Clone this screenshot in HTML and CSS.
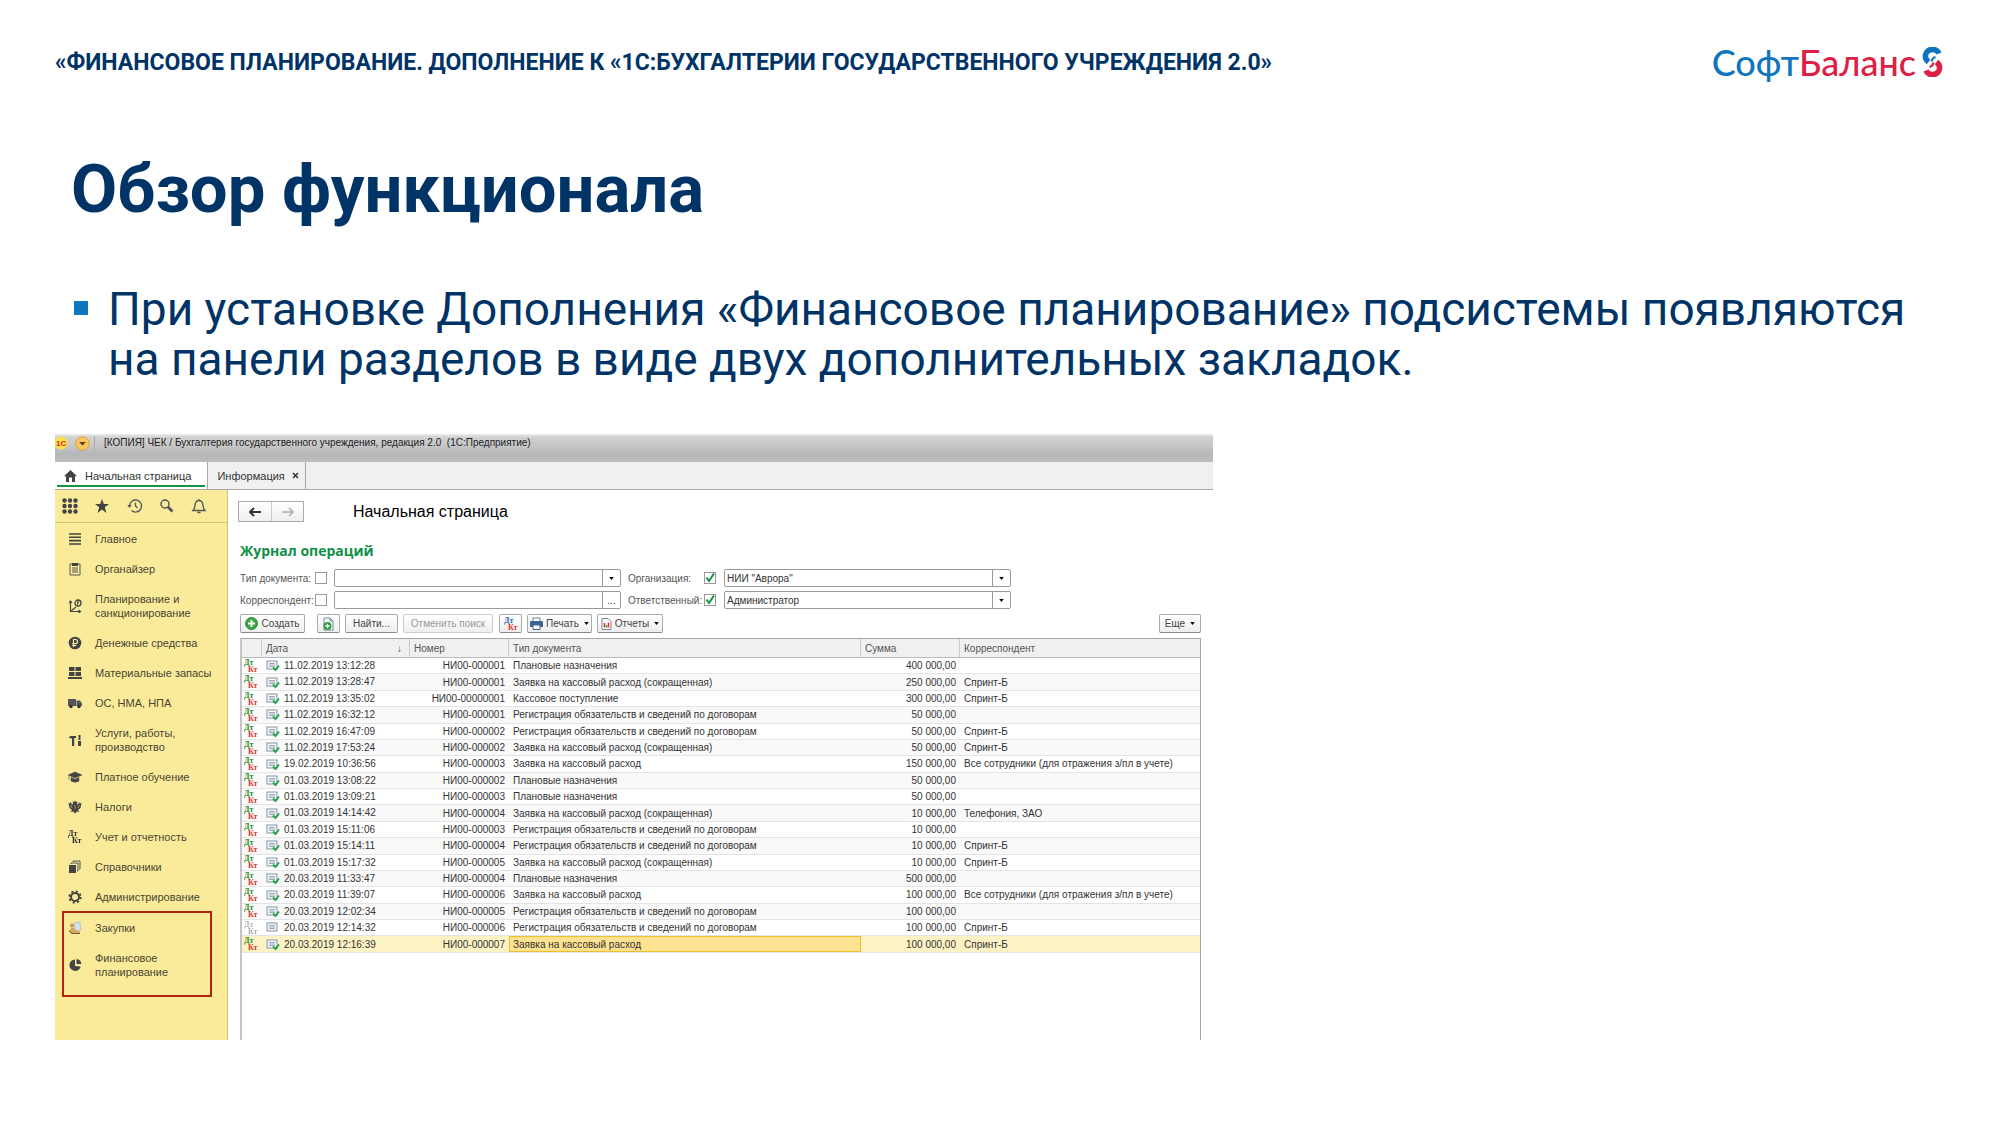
FILE: index.html
```html
<!DOCTYPE html>
<html lang="ru">
<head>
<meta charset="utf-8">
<meta name="viewport" content="width=device-width, initial-scale=1">
<title>Обзор функционала</title>
<link rel="stylesheet" href="styles.css">
</head>
<body>
<svg class="sprite" aria-hidden="true">
  <symbol id="dk" viewBox="0 0 14 14"><text class="dk-d" x="0" y="6">Дт</text><text class="dk-k" x="4" y="13">Кт</text></symbol>
  <symbol id="doc" viewBox="0 0 14 12"><rect x="1" y="1" width="10" height="8" fill="#f4f8fb" stroke="#8197ab"/><path d="M3 3.5h6M3 5h6M3 6.500h6" stroke="#8a9aa8" stroke-width=".8"/></symbol>
  <symbol id="ok" viewBox="0 0 14 12"><rect x="1" y="1" width="10" height="8" fill="#f4f8fb" stroke="#8197ab"/><path d="M3 3.5h6M3 5h6M3 6.500h6" stroke="#8a9aa8" stroke-width=".8"/><path d="M7 7.500l2.500 2.500L13 5.500" fill="none" stroke="#27a348" stroke-width="2"/></symbol>
  <symbol id="car" viewBox="0 0 6 4"><path d="M0 0h6L3 4z"/></symbol>
</svg>

<header class="top">
  <p class="product">«ФИНАНСОВОЕ ПЛАНИРОВАНИЕ. ДОПОЛНЕНИЕ К «1С:БУХГАЛТЕРИИ ГОСУДАРСТВЕННОГО УЧРЕЖДЕНИЯ 2.0»</p>
  <div class="logo"><span><b class="logo-a">Софт</b><b class="logo-b">Баланс</b></span>
    <svg width="21" height="30" viewBox="0 0 21 30" fill="none" stroke-width="5.500"><path d="M17 6.500A7 6.500 0 0 0 4 6.500Q2 11.500 6.500 15" stroke="#0f75bc"/><path d="M4 23.500A7 6.500 0 0 0 17 23.500Q19 18.500 14.500 15" stroke="#dc1f44"/><path d="M9.500 14.500q.5-3.500 4-4.500" stroke="#0f75bc" stroke-width="2"/><path d="M11.500 15.500q-.5 3.500-4 4.500" stroke="#dc1f44" stroke-width="2"/></svg>
  </div>
</header>

<main class="slide">
  <h1>Обзор функционала</h1>
  <ul class="points"><li>При установке Дополнения «Финансовое планирование» подсистемы появляются на панели разделов в виде двух дополнительных закладок.</li></ul>

  <section class="app">
    <div class="titlebar">
      <svg width="13" height="14" viewBox="0 0 13 14"><ellipse cx="6" cy="7" rx="6.500" ry="6.500" fill="#fbe24a"/><text class="one-c" x="1" y="10">1С</text></svg>
      <svg class="menu-dot" width="15" height="15" viewBox="0 0 15 15"><circle cx="7.500" cy="7.500" r="6.700" fill="#f8c65e" stroke="#d9a33c"/><path d="M4 6h7l-3.500 3.500z" fill="#5d4320"/></svg>
      <span class="title-text">[КОПИЯ] ЧЕК / Бухгалтерия государственного учреждения, редакция 2.0&nbsp; (1С:Предприятие)</span>
    </div>
    <nav class="tabs">
      <a class="tab active" href="#home"><svg width="13" height="12" viewBox="0 0 13 12"><path d="M6.500 0L13 6.200h-2V12H8V7.500H5V12H2V6.200H0z" fill="#444"/></svg>Начальная страница</a>
      <a class="tab" href="#info">Информация<svg width="7" height="7" viewBox="0 0 7 7"><path d="M1 1l5 5M6 1L1 6" stroke="#333" stroke-width="1.500"/></svg></a>
    </nav>
    <div class="workspace">
      <aside class="side">
        <div class="tools">
          <button type="button" aria-label="Разделы"><svg width="16" height="16" viewBox="0 0 16 16" fill="#444"><circle cx="2.500" cy="2.500" r="2.200"/><circle cx="8" cy="2.500" r="2.200"/><circle cx="13.500" cy="2.500" r="2.200"/><circle cx="2.500" cy="8" r="2.200"/><circle cx="8" cy="8" r="2.200"/><circle cx="13.500" cy="8" r="2.200"/><circle cx="2.500" cy="13.500" r="2.200"/><circle cx="8" cy="13.500" r="2.200"/><circle cx="13.500" cy="13.500" r="2.200"/></svg></button>
          <button type="button" aria-label="Избранное"><svg width="16" height="16" viewBox="0 0 16 16"><path d="M8 1l1.800 5H15l-4.200 3.200L12.400 15 8 11.400 3.600 15l1.600-5.800L1 6h5.200z" fill="#444"/></svg></button>
          <button type="button" aria-label="История"><svg width="16" height="16" viewBox="0 0 16 16" fill="none" stroke="#555" stroke-width="1.300"><path d="M2.500 8a6 6 0 1 1 2 4.500M8.500 4.500V8l2 2"/><path d="M.3 7h4.400L2.500 10z" fill="#555" stroke="none"/></svg></button>
          <button type="button" aria-label="Поиск"><svg width="16" height="16" viewBox="0 0 16 16" fill="none" stroke="#555"><circle cx="6" cy="6" r="4" stroke-width="1.500"/><path d="M9 9l4.500 4.500" stroke-width="2.800"/></svg></button>
          <button type="button" aria-label="Уведомления"><svg width="16" height="16" viewBox="0 0 16 16" fill="none" stroke="#555" stroke-width="1.300"><path d="M2 12.500C4.500 10 3.500 8 4.500 5 5.200 3 6.500 2.500 8 2.500S10.800 3 11.500 5c1 3 0 5 2.500 7.500zM8 1v1.500M6.500 14.500h3"/></svg></button>
        </div>
        <ul class="sections">
          <li><a href="#s1"><svg viewBox="0 0 14 14"><path d="M1 2h12M1 5.300h12M1 8.600h12M1 12h12" stroke="#444" stroke-width="1.600"/></svg>Главное</a></li>
          <li><a href="#s2"><svg viewBox="0 0 14 14"><path d="M2 2h10v11H2zM4 6h6M4 8h6M4 10h6" fill="none" stroke="#555"/><path d="M4 1h6v3H4z" fill="#444"/></svg>Органайзер</a></li>
          <li><a href="#s3"><svg viewBox="0 0 14 14"><path d="M2.500 13V2M1 4l1.500-2L4 4M2 12.500h10M10.500 11l2 1.500-2 1.500M3 12l5-4" fill="none" stroke="#444" stroke-width="1.200"/><circle cx="10" cy="4" r="3" fill="none" stroke="#444" stroke-width="1.300"/><path d="M9.500 6V2.500h1.200v1.700H9" fill="none" stroke="#444" stroke-width=".8"/></svg>Планирование и<br>санкционирование</a></li>
          <li><a href="#s4"><svg viewBox="0 0 14 14"><circle cx="7" cy="7" r="6.300" fill="#444"/><path d="M5.500 11V3.500h2a2 2 0 0 1 0 4H4.300M4.300 9.300h4" fill="none" stroke="#faeb9b" stroke-width="1.200"/></svg>Денежные средства</a></li>
          <li><a href="#s5"><svg viewBox="0 0 14 14"><path d="M1 1h5.500v4H1zM7.500 1H13v4H7.500zM1 6h5.500v4H1zM7.500 6H13v4H7.500zM0 11h14v2H0z" fill="#444"/></svg>Материальные запасы</a></li>
          <li><a href="#s6"><svg viewBox="0 0 14 14"><path d="M0 3h8v7H0zM8.500 4.500H12l2 3V10H8.500z" fill="#555"/><circle cx="3" cy="10.500" r="1.700" fill="#333"/><circle cx="11" cy="10.500" r="1.700" fill="#333"/></svg>ОС, НМА, НПА</a></li>
          <li><a href="#s7"><svg viewBox="0 0 14 14"><path d="M1 5q0-2 2-2h5v2H6.200v8H4V5.500zM10.500 2h2v5h-2zM10 8h3v5h-3z" fill="#444"/></svg>Услуги, работы,<br>производство</a></li>
          <li><a href="#s8"><svg viewBox="0 0 14 14"><path d="M7 2l7 3-7 3-7-3zM3 7.500l4 1.700 4-1.700V11q-4 2.500-8 0zM1 6v4" fill="#444" stroke="#444" stroke-width=".5"/></svg>Платное обучение</a></li>
          <li><a href="#s9"><svg viewBox="0 0 14 14"><path d="M5 3.500L4.500 1.500 6 2l1-1.500L8 2l1.500-.5L9 3.500l1 1.500 1-3 1 1.500 1.500-1-.5 3-.5 2.500L10 10l1.500 2-2.500-.5-2 2-2-2-2.500.5L4 10 1.500 8 1 5.500l-.5-3 1.500 1L3 2l1 3z" fill="#444"/><path d="M7 5v4M2.500 5l1.500 3M11.500 5L10 8" stroke="#c9be7c" stroke-width=".7" fill="none"/></svg>Налоги</a></li>
          <li><a href="#s10"><svg class="mono" viewBox="0 0 14 14"><use href="#dk"/></svg>Учет и отчетность</a></li>
          <li><a href="#s11"><svg viewBox="0 0 14 14"><path d="M1 5h7v8H1z" fill="#444"/><path d="M3 4V3h7v8H9M5 2V1h7v8h-1" fill="none" stroke="#555"/></svg>Справочники</a></li>
          <li><a href="#s12"><svg viewBox="0 0 14 14" fill="none" stroke="#444"><circle cx="7" cy="7" r="4" stroke-width="2"/><circle cx="7" cy="7" r="5.700" stroke-width="1.800" stroke-dasharray="2.200 2.277"/></svg>Администрирование</a></li>
          <li class="marked"><ul>
            <li><a href="#s13"><svg viewBox="0 0 14 14"><path d="M6 2l6-1 1 8-6 1z" fill="#d5e2ec" stroke="#9db2c2" stroke-width=".6"/><circle cx="4" cy="4.500" r="2" fill="#c99550"/><path d="M1 10q2-4 5-3l3 3 3 .5v2H3z" fill="#d9a45b"/><path d="M1 10l3 2.500h8" stroke="#725c45" fill="none"/></svg>Закупки</a></li>
            <li><a href="#s14"><svg viewBox="0 0 14 14"><path d="M7 1.500A5.700 5.700 0 1 0 12.700 8.500L7 8z" fill="#444"/><path d="M8.500 1A5 5 0 0 1 13.300 6L8.500 6z" fill="#444"/></svg>Финансовое<br>планирование</a></li>
          </ul></li>
        </ul>
      </aside>

      <div class="content">
        <div class="page-head">
          <div class="history">
            <button type="button" aria-label="Назад"><svg width="13" height="10" viewBox="0 0 13 10"><path d="M1 5h11M5 1L1 5l4 4" fill="none" stroke="#333" stroke-width="2"/></svg></button>
            <button type="button" aria-label="Вперед"><svg width="13" height="10" viewBox="0 0 13 10"><path d="M1 5h10.500M8 1l4 4-4 4" fill="none" stroke="#aaa" stroke-width="1.500"/></svg></button>
          </div>
          <h2>Начальная страница</h2>
        </div>
        <h3>Журнал операций</h3>

        <form class="filters">
          <label for="f1">Тип документа:</label><input type="checkbox" aria-label="Отбор по типу документа">
          <div class="combo"><select id="f1"><option></option></select><span class="drop"><svg width="5" height="3"><use href="#car"/></svg></span></div>
          <label for="f2">Организация:</label><input type="checkbox" checked aria-label="Отбор по организации">
          <div class="combo"><select id="f2"><option>НИИ "Аврора"</option></select><span class="drop"><svg width="5" height="3"><use href="#car"/></svg></span></div>
          <label for="f3">Корреспондент:</label><input type="checkbox" aria-label="Отбор по корреспонденту">
          <div class="combo"><input type="text" id="f3"><button type="button" class="drop">...</button></div>
          <label for="f4">Ответственный:</label><input type="checkbox" checked aria-label="Отбор по ответственному">
          <div class="combo"><select id="f4"><option>Администратор</option></select><span class="drop"><svg width="5" height="3"><use href="#car"/></svg></span></div>
        </form>

        <div class="commands">
          <button type="button" class="btn create"><svg width="13" height="13" viewBox="0 0 13 13"><circle cx="6.500" cy="6.500" r="6" fill="#3aa648" stroke="#2a8a3a"/><path d="M6.500 3v7M3 6.500h7" stroke="#fff" stroke-width="2"/></svg>Создать</button>
          <button type="button" class="btn copy" aria-label="Скопировать"><svg width="13" height="14" viewBox="0 0 13 14"><path d="M2 1h6l3 3v9H2z" fill="#fff" stroke="#71869a"/><path d="M8 1v3h3" fill="none" stroke="#71869a"/><circle cx="5.500" cy="9" r="4" fill="#2f9c3f"/><path d="M5.500 6.800v4.400M3.300 9h4.400" stroke="#fff" stroke-width="1.300"/></svg></button>
          <button type="button" class="btn find">Найти...</button>
          <button type="button" class="btn cancel" disabled>Отменить поиск</button>
          <button type="button" class="btn entries" aria-label="Проводки"><svg class="blue" width="14" height="14" viewBox="0 0 14 14"><text class="dk-d" x="0" y="6">Дт</text><text class="dk-k" x="4" y="13">Кт</text></svg></button>
          <button type="button" class="btn print"><svg width="13" height="13" viewBox="0 0 13 13"><path d="M3 1h7v4H3z" fill="#fff" stroke="#6b7f93"/><path d="M0 5q0-1 1-1h11q1 0 1 1v5H0z" fill="#3c6591"/><path d="M3 8h7v4.500H3z" fill="#fff" stroke="#3c6591"/></svg>Печать<svg class="caret" width="5" height="3"><use href="#car"/></svg></button>
          <button type="button" class="btn reports"><svg width="11" height="12" viewBox="0 0 11 12"><path d="M1 .5h6l3 3v8H1z" fill="#fff" stroke="#7d8790"/><path d="M3.500 9.500V5" stroke="#d33" stroke-width="1.600"/><path d="M5.500 9.500V7" stroke="#2a9a3c" stroke-width="1.600"/><path d="M7.500 9.500V4.500" stroke="#d33" stroke-width="1.600"/></svg>Отчеты<svg class="caret" width="5" height="3"><use href="#car"/></svg></button>
          <button type="button" class="btn more">Еще<svg class="caret" width="5" height="3"><use href="#car"/></svg></button>
        </div>

        <div class="grid">
          <table>
            <colgroup><col class="c-dk"><col class="c-date"><col class="c-num"><col class="c-type"><col class="c-sum"><col></colgroup>
            <thead><tr><th></th><th><span class="sorted">Дата<span>↓</span></span></th><th>Номер</th><th>Тип документа</th><th>Сумма</th><th>Корреспондент</th></tr></thead>
            <tbody>
            <tr><td><svg><use href="#dk"/></svg></td><td><svg><use href="#ok"/></svg>11.02.2019 13:12:28</td><td>НИ00-000001</td><td>Плановые назначения</td><td>400 000,00</td><td></td></tr>
            <tr><td><svg><use href="#dk"/></svg></td><td><svg><use href="#ok"/></svg>11.02.2019 13:28:47</td><td>НИ00-000001</td><td>Заявка на кассовый расход (сокращенная)</td><td>250 000,00</td><td>Спринт-Б</td></tr>
            <tr><td><svg><use href="#dk"/></svg></td><td><svg><use href="#ok"/></svg>11.02.2019 13:35:02</td><td>НИ00-00000001</td><td>Кассовое поступление</td><td>300 000,00</td><td>Спринт-Б</td></tr>
            <tr><td><svg><use href="#dk"/></svg></td><td><svg><use href="#ok"/></svg>11.02.2019 16:32:12</td><td>НИ00-000001</td><td>Регистрация обязательств и сведений по договорам</td><td>50 000,00</td><td></td></tr>
            <tr><td><svg><use href="#dk"/></svg></td><td><svg><use href="#ok"/></svg>11.02.2019 16:47:09</td><td>НИ00-000002</td><td>Регистрация обязательств и сведений по договорам</td><td>50 000,00</td><td>Спринт-Б</td></tr>
            <tr><td><svg><use href="#dk"/></svg></td><td><svg><use href="#ok"/></svg>11.02.2019 17:53:24</td><td>НИ00-000002</td><td>Заявка на кассовый расход (сокращенная)</td><td>50 000,00</td><td>Спринт-Б</td></tr>
            <tr><td><svg><use href="#dk"/></svg></td><td><svg><use href="#ok"/></svg>19.02.2019 10:36:56</td><td>НИ00-000003</td><td>Заявка на кассовый расход</td><td>150 000,00</td><td>Все сотрудники (для отражения з/пл в учете)</td></tr>
            <tr><td><svg><use href="#dk"/></svg></td><td><svg><use href="#ok"/></svg>01.03.2019 13:08:22</td><td>НИ00-000002</td><td>Плановые назначения</td><td>50 000,00</td><td></td></tr>
            <tr><td><svg><use href="#dk"/></svg></td><td><svg><use href="#ok"/></svg>01.03.2019 13:09:21</td><td>НИ00-000003</td><td>Плановые назначения</td><td>50 000,00</td><td></td></tr>
            <tr><td><svg><use href="#dk"/></svg></td><td><svg><use href="#ok"/></svg>01.03.2019 14:14:42</td><td>НИ00-000004</td><td>Заявка на кассовый расход (сокращенная)</td><td>10 000,00</td><td>Телефония, ЗАО</td></tr>
            <tr><td><svg><use href="#dk"/></svg></td><td><svg><use href="#ok"/></svg>01.03.2019 15:11:06</td><td>НИ00-000003</td><td>Регистрация обязательств и сведений по договорам</td><td>10 000,00</td><td></td></tr>
            <tr><td><svg><use href="#dk"/></svg></td><td><svg><use href="#ok"/></svg>01.03.2019 15:14:11</td><td>НИ00-000004</td><td>Регистрация обязательств и сведений по договорам</td><td>10 000,00</td><td>Спринт-Б</td></tr>
            <tr><td><svg><use href="#dk"/></svg></td><td><svg><use href="#ok"/></svg>01.03.2019 15:17:32</td><td>НИ00-000005</td><td>Заявка на кассовый расход (сокращенная)</td><td>10 000,00</td><td>Спринт-Б</td></tr>
            <tr><td><svg><use href="#dk"/></svg></td><td><svg><use href="#ok"/></svg>20.03.2019 11:33:47</td><td>НИ00-000004</td><td>Плановые назначения</td><td>500 000,00</td><td></td></tr>
            <tr><td><svg><use href="#dk"/></svg></td><td><svg><use href="#ok"/></svg>20.03.2019 11:39:07</td><td>НИ00-000006</td><td>Заявка на кассовый расход</td><td>100 000,00</td><td>Все сотрудники (для отражения з/пл в учете)</td></tr>
            <tr><td><svg><use href="#dk"/></svg></td><td><svg><use href="#ok"/></svg>20.03.2019 12:02:34</td><td>НИ00-000005</td><td>Регистрация обязательств и сведений по договорам</td><td>100 000,00</td><td></td></tr>
            <tr><td><svg class="draft"><use href="#dk"/></svg></td><td><svg><use href="#doc"/></svg>20.03.2019 12:14:32</td><td>НИ00-000006</td><td>Регистрация обязательств и сведений по договорам</td><td>100 000,00</td><td>Спринт-Б</td></tr>
            <tr class="current"><td><svg><use href="#dk"/></svg></td><td><svg><use href="#ok"/></svg>20.03.2019 12:16:39</td><td>НИ00-000007</td><td>Заявка на кассовый расход</td><td>100 000,00</td><td>Спринт-Б</td></tr>
            </tbody>
          </table>
        </div>
      </div>
    </div>
  </section>
</main>
</body>
</html>
```
FILE: styles.css
```css
* { box-sizing: border-box; }
body { margin: 0; background: #fff; color: #003366; font-family: Roboto, sans-serif; }
h1, h2, h3, p, ul { margin: 0; padding: 0; }
ul { list-style: none; }
a { color: inherit; text-decoration: none; }
button, input, select { font: inherit; color: inherit; margin: 0; }
svg { flex: none; display: block; }
.sprite { display: none; }

.top { display: flex; justify-content: space-between; align-items: center; padding: 45px 57px 0 55px; height: 80px; }
.product { font-size: 23px; font-weight: 700; line-height: 36px; }
.logo { display: flex; align-items: center; gap: 6px; padding-bottom: 2px; font: 36px/32px Lato, Inter, sans-serif; }
.logo b { font-weight: 500; }
.logo-a { color: #0f75bc; }
.logo-b { color: #dc1f44; }

.slide { padding: 69px 55px 0; }
h1 { padding-left: 16px; font-size: 67px; line-height: 80px; font-weight: 700; }
.points { margin: 55px 0 50px; padding-left: 19px; font-size: 46px; line-height: 50px; }
.points li { display: flex; gap: 20px; }
.points li::before { content: ""; flex: none; width: 14px; height: 14px; margin-top: 17px; background: #0f75bc; }

.app { display: flex; flex-direction: column; max-width: 1158px; min-height: 606px; font-family: "Liberation Sans", sans-serif; font-size: 10px; color: #333; }
.titlebar { display: flex; align-items: flex-start; height: 28px; padding-top: 2px; background: linear-gradient(#eee 0, #d2d2d2 3px, #c6c6c6 12px, #b4b6b8 20px, #bcbec0 28px); }
.titlebar .menu-dot { margin-left: 7px; }
.title-text { margin-left: 4px; padding-left: 9px; border-left: 1px solid #aaa; line-height: 14px; color: #222; }
.one-c { font: bold 8px "Liberation Sans", sans-serif; fill: #d22; }

.tabs { display: flex; height: 28px; background: #f0f0f0; border-bottom: 1px solid #a8a8a8; font-size: 11px; }
.tab { display: flex; align-items: center; gap: 7px; padding: 0 6px 0 9px; border-right: 1px solid #a8a8a8; }
.tab.active { gap: 8px; padding: 0 16px 0 9px; background: linear-gradient(#159447, #159447) 2px 23px / 148px 2px no-repeat #fff; }

.workspace { display: flex; flex: 1; }
.side { width: 173px; flex: none; background: #faeb9b; border-right: 1px solid #cfc27c; font-size: 11px; }
.tools { display: flex; justify-content: space-between; padding: 8px 20px 8px 7px; border-bottom: 1px solid #cfc27c; }
.tools button { padding: 0; border: 0; background: none; }
.sections { padding: 1px 15px 0 7px; }
.sections a { display: flex; align-items: center; gap: 13px; padding: 8px 0 8px 6px; line-height: 14px; color: #4a4532; white-space: nowrap; }
.sections svg { width: 14px; height: 14px; }
.marked { height: 86px; margin-top: -1px; padding-top: 2px; outline: 2px solid #b5230f; outline-offset: -2px; }

.dk-d, .dk-k { font: bold 8px "Liberation Serif", serif; fill: #2c8a1e; }
.dk-k { fill: #e0352b; }
.blue .dk-d { fill: #2d6ca5; }
.mono { filter: grayscale(1) brightness(.5); }
.draft { filter: grayscale(1); opacity: .5; }

.content { flex: 1; min-width: 0; display: flex; flex-direction: column; padding: 11px 12px 0; }
.page-head { display: flex; align-items: center; height: 21px; margin-left: -2px; }
.history { display: flex; border: 1px solid #aaa; background: linear-gradient(#fff, #eee); height: 21px; }
.history button { display: grid; place-items: center; width: 32px; padding: 0; border: 0; background: none; }
.history button + button { border-left: 1px solid #ccc; }
h2 { margin-left: 49px; font: 16px/20px "Liberation Sans", sans-serif; color: #000; }
h3 { margin-top: 19px; font: bold 14px/20px "Open Sans", sans-serif; color: #0f9046; }

.filters { display: grid; grid-template-columns: 75px 19px 294px 76px 20px 294px; row-gap: 4px; align-items: center; margin-top: 8px; }
.filters label { color: #555; white-space: nowrap; }
.filters input[type=checkbox] { appearance: none; width: 12px; height: 12px; border: 1px solid #999; background: #fff; }
.filters input[type=checkbox]:checked { background: url("data:image/svg+xml,%3Csvg xmlns='http://www.w3.org/2000/svg' viewBox='0 0 10 10'%3E%3Cpath d='M1.500 4.500L4 8l5-7.500' fill='none' stroke='%23159447' stroke-width='2'/%3E%3C/svg%3E") center / 10px; }
.combo { display: flex; height: 18px; margin-right: 7px; border: 1px solid #999; border-radius: 2px; background: #fff; }
.combo select, .combo input { flex: 1; min-width: 0; appearance: none; border: 0; padding: 0 2px; background: none; }
.drop { display: grid; place-items: center; width: 18px; padding: 0; border: 0; border-left: 1px solid #999; background: none; }

.commands { display: flex; margin: 5px 0; }
.btn { display: flex; align-items: center; justify-content: center; gap: 3px; height: 19px; padding: 0; white-space: nowrap; border: 1px solid #aaa; border-bottom-color: #888; border-radius: 2px; background: linear-gradient(#fff, #eee); color: #444; }
.btn:disabled { color: #999; border-color: #ccc; }
.caret { margin-left: 2px; }
.create { width: 65px; margin-right: 12px; }
.copy { width: 23px; margin-right: 5px; }
.find { width: 53px; margin-right: 5px; }
.cancel { width: 90px; margin-right: 6px; }
.entries { width: 23px; margin-right: 5px; }
.print { width: 65px; margin-right: 5px; }
.reports { width: 66px; }
.more { width: 42px; margin-left: auto; }

.grid { flex: 1; border: 1px solid #a6a6a6; border-bottom: 0; border-left: 2px solid #c4c4c4; }
table { width: 100%; height: 314px; table-layout: fixed; border-collapse: separate; border-spacing: 0; line-height: 13px; }
.c-dk { width: 20px; }
.c-date { width: 148px; }
.c-num { width: 99px; }
.c-type { width: 352px; }
.c-sum { width: 99px; }
th { height: 19px; padding: 0 4px; text-align: left; font-weight: 400; color: #555; background: #f0f0f0; border-bottom: 1px solid #bbb; border-right: 1px solid #ccc; }
th:last-child { border-right: 0; }
.sorted { display: flex; justify-content: space-between; padding-right: 3px; }
td { padding: 0 4px; white-space: nowrap; border-bottom: 1px solid #e4e4e4; }
td svg { width: 14px; height: 12px; display: inline-block; vertical-align: middle; }
td:first-child { padding: 0 2px; }
td:first-child svg { height: 14px; }
td:nth-child(2) svg { margin-right: 4px; }
td:nth-child(3), td:nth-child(5) { text-align: right; }
tbody tr:nth-child(even) { background: #f9f9f9; }
tbody tr.current { background: #fdf2c4; }
.current td:nth-child(4) { background: #fee290; box-shadow: inset 0 0 0 1px #efc02c; }
```
